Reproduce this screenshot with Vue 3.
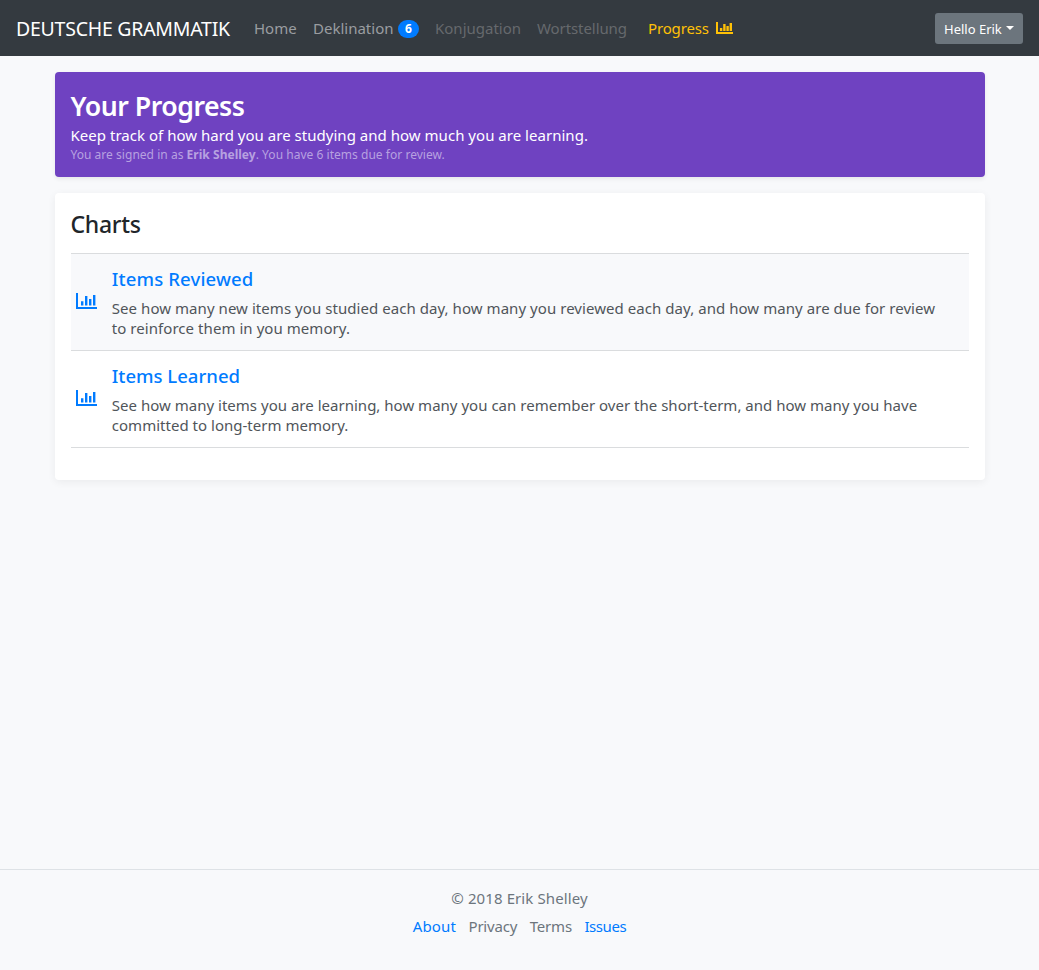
<script setup>
const charts = [
  {
    title: 'Items Reviewed',
    lines: [
      'See how many new items you studied each day, how many you reviewed each day, and how many are due for review',
      'to reinforce them in you memory.',
    ],
  },
  {
    title: 'Items Learned',
    lines: [
      'See how many items you are learning, how many you can remember over the short-term, and how many you have',
      'committed to long-term memory.',
    ],
  },
]
</script>

<template>
  <div class="page">
    <nav class="navbar">
      <a class="brand">DEUTSCHE GRAMMATIK</a>
      <a class="link home">Home</a>
      <a class="link dekl">Deklination</a>
      <span class="badge">6</span>
      <a class="link konj disabled">Konjugation</a>
      <a class="link wort disabled">Wortstellung</a>
      <a class="link prog">Progress</a>
      <svg class="nav-icon" viewBox="0 0 17 12"><path d="M0 0h2v10h15v2H0zM3.9 6h2.4v3H3.9zM7.2 2h2.4v7H7.2zM10.4 4h2.4v5h-2.4zM13.6 1h2.4v8h-2.4z" /></svg>
      <button class="user"><span>Hello Erik</span><i class="caret"></i></button>
    </nav>

    <main>
      <header class="hero">
        <h1>Your Progress</h1>
        <p class="lead">Keep track of how hard you are studying and how much you are learning.</p>
        <p class="status">You are signed in as <b>Erik Shelley</b>. You have 6 items due for review.</p>
      </header>

      <section class="card">
        <h2>Charts</h2>
        <article v-for="(c, i) in charts" :key="i" class="row" :class="'row-' + i">
          <svg class="row-icon" viewBox="0 0 22 16"><path d="M0 0h2v14h19v2H0zM5 8.3h2.4V12.5H5zM9 3h2.4v9.5H9zM13 6h2.4v6.5H13zM17 2h2.4v10.5H17z" /></svg>
          <div>
            <h3>{{ c.title }}</h3>
            <p v-for="(l, j) in c.lines" :key="j">{{ l }}</p>
          </div>
        </article>
      </section>
    </main>

    <footer>
      <p class="copy">© 2018 Erik Shelley</p>
      <div class="links">
        <a class="blue about">About</a><a>Privacy</a><a>Terms</a><a class="blue issues">Issues</a>
      </div>
    </footer>
  </div>
</template>

<style>
body { background: #f8f9fb; }
</style>

<style scoped>
* { box-sizing: border-box; margin: 0; }
.page {
  height: 970px;
  display: flex;
  flex-direction: column;
  background: #f8f9fb;
  font-family: "Noto Sans", "Open Sans", sans-serif;
  color: #212529;
  white-space: nowrap;
}
.navbar {
  height: 56px;
  flex: none;
  display: flex;
  align-items: center;
  padding: 0 16px;
  background: #343a40;
  font-size: 15px;
  color: #9a9da0;
}
.brand { width: 238px; font-size: 19.5px; letter-spacing: -0.25px; color: #fff; line-height: 28px; padding-top: 1px; }
.link { line-height: 24px; }
.home { width: 59px; }
.dekl { width: 85px; }
.badge {
  width: 21px;
  height: 18px;
  margin: 1px 16px 0 0;
  border-radius: 9px;
  background: #007bff;
  color: #fff;
  font-size: 12px;
  font-weight: 700;
  line-height: 18px;
  text-align: center;
}
.disabled { color: #66696d; }
.konj { width: 102px; }
.wort { width: 111px; letter-spacing: -0.08px; }
.prog { width: 68px; letter-spacing: -0.15px; color: #ffc107; }
.nav-icon { width: 17px; height: 12px; fill: #ffc107; }
.user {
  margin-left: auto;
  width: 88px;
  height: 31px;
  padding: 1px 9px 0;
  display: flex;
  align-items: center;
  justify-content: space-between;
  border: 0;
  border-radius: 3px;
  background: #6c757d;
  color: #fff;
  font: 13px "Noto Sans", sans-serif;
}
.caret { border: 4px solid transparent; border-top-color: #fff; border-bottom: 0; margin-top: -1px; }
main { width: 930px; margin: 16px auto 0; flex: 1; }
.hero {
  height: 105px;
  padding: 16px 16px 0;
  border-radius: 4px;
  background: #6f42c1;
  box-shadow: 0 2px 4px rgba(0, 0, 0, 0.075);
  color: #fff;
}
h1 { height: 37px; font-size: 26.7px; letter-spacing: -0.5px; font-weight: 600; line-height: 36px; }
.lead { font-size: 15px; letter-spacing: 0.025px; line-height: 21px; }
.status { font-size: 12px; letter-spacing: 0.03px; line-height: 18px; color: #b7a1e0; }
.card {
  height: 287px;
  margin-top: 16px;
  padding: 15px 16px 0;
  border-radius: 4px;
  background: #fff;
  box-shadow: 0 2px 8px rgba(0, 0, 0, 0.06);
}
h2 { height: 45px; font-size: 23px; letter-spacing: -0.3px; font-weight: 500; line-height: 32px; }
.row {
  height: 97px;
  display: flex;
  border-top: 1px solid #dadcde;
  padding: 12px 0 0 5px;
}
.row-0 { background: #f8f9fb; }
.row-1 { height: 98px; border-bottom: 1px solid #dadcde; }
.row-icon { width: 22px; height: 16px; margin: 27px 14.3px 0 0; fill: #007bff; }
h3 { height: 32px; font-size: 18.5px; font-weight: 500; line-height: 25px; color: #007bff; }
.row-0 h3 { letter-spacing: 0.15px; }
.row p { font-size: 15px; line-height: 20px; color: #50555a; letter-spacing: 0.015px; }
.row-0 p { letter-spacing: 0.055px; }
footer {
  height: 101px;
  border-top: 1px solid #dee2e6;
  padding-top: 16px;
  text-align: center;
  font-size: 15px;
  line-height: 24px;
  color: #6c757d;
}
.copy { letter-spacing: 0.1px; }
.links { display: flex; justify-content: center; gap: 12.6px; margin-top: 4px; letter-spacing: -0.2px; }
.about { letter-spacing: 0.1px; }
.issues { letter-spacing: -0.45px; }
.blue { color: #007bff; }
</style>
